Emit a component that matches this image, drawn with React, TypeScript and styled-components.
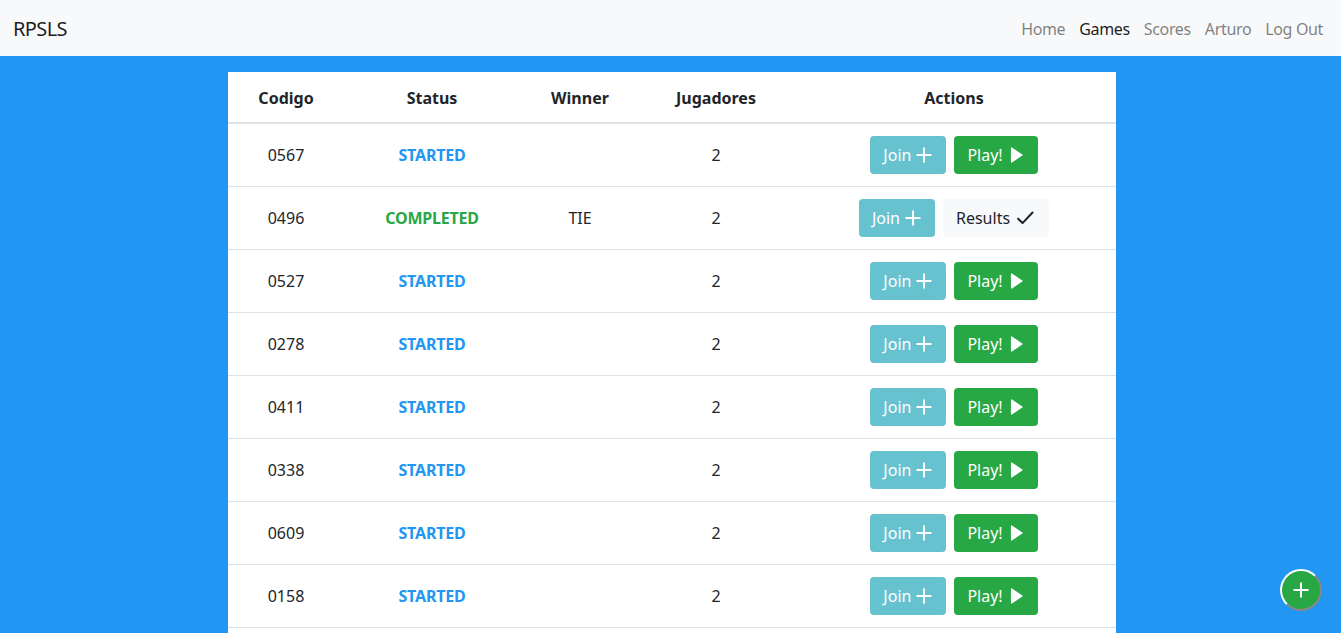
import React from "react";
import styled, { createGlobalStyle } from "styled-components";

const Global = createGlobalStyle`
  html, body { margin: 0; padding: 0; }
  body {
    background: #2196f3;
    font-family: "Segoe UI", "Noto Sans", sans-serif;
    font-size: 16px;
    line-height: 1.5;
    color: #212529;
    overflow: hidden;
  }
  * { box-sizing: border-box; }
`;

const NavBar = styled.nav`
  height: 56px;
  background: #f8f9fa;
  display: flex;
  align-items: center;
  justify-content: space-between;
  padding: 2px 11px 0 13px;
`;

const Brand = styled.div`
  font-size: 20px;
  letter-spacing: -0.6px;
  color: rgba(0, 0, 0, 0.9);
`;

const NavList = styled.div`
  display: flex;
`;

const NavLink = styled.a<{ $active?: boolean }>`
  padding: 8px 7px;
  letter-spacing: -0.35px;
  color: ${(p) => (p.$active ? "rgba(0,0,0,0.9)" : "rgba(0,0,0,0.5)")};
  text-decoration: none;
  font-size: 16px;
`;

const Main = styled.main`
  display: flex;
  justify-content: center;
  padding: 16px 0 0 3px;
`;

const Table = styled.table`
  width: 888px;
  background: #fff;
  border-collapse: collapse;
  table-layout: fixed;
`;

const Th = styled.th<{ $w: number }>`
  width: ${(p) => p.$w}px;
  padding: 14px 12px 12px;
  font-weight: 700;
  text-align: center;
  border-bottom: 2px solid #dee2e6;
  line-height: 24px;
`;

const Td = styled.td`
  padding: 12px;
  text-align: center;
  vertical-align: middle;
  border-top: 1px solid #dee2e6;
  line-height: 24px;
`;

const Status = styled.span<{ $done?: boolean }>`
  font-weight: 700;
  letter-spacing: -0.2px;
  color: ${(p) => (p.$done ? "#28a745" : "#2196f3")};
`;

const Actions = styled.div`
  display: flex;
  justify-content: center;
  gap: 8px;
`;

const Btn = styled.button<{ $variant: "info" | "success" | "light" }>`
  height: 38px;
  padding: 6px 12px;
  border: 1px solid transparent;
  border-radius: 4px;
  font-family: inherit;
  font-size: 16px;
  line-height: 24px;
  display: inline-flex;
  align-items: center;
  gap: 4px;
  background: ${(p) =>
    p.$variant === "info" ? "#17a2b8" : p.$variant === "success" ? "#28a745" : "#f8f9fa"};
  color: ${(p) => (p.$variant === "light" ? "#212529" : "#fff")};
  opacity: ${(p) => (p.$variant === "info" ? 0.65 : 1)};
`;

const Fab = styled.button`
  position: fixed;
  right: 19px;
  bottom: 22px;
  width: 42px;
  height: 42px;
  border-radius: 50%;
  background: #28a745;
  border: 2px solid #fff;
  border-right-color: #888;
  border-bottom-color: #888;
  display: flex;
  align-items: center;
  justify-content: center;
  padding: 0;
`;

const PlusIcon = ({ size = 18, color = "currentColor" }: { size?: number; color?: string }) => (
  <svg width={size} height={size} viewBox="0 0 16 16" fill="none" stroke={color} strokeWidth="1.8" strokeLinecap="round">
    <path d="M8 2v12M2 8h12" />
  </svg>
);

const PlayIcon = () => (
  <svg width="18" height="18" viewBox="0 0 16 16" fill="#fff">
    <path d="M3.5 1.8v12.4c0 .5.5.8.9.5l9.2-6.2a.6.6 0 0 0 0-1L4.4 1.3c-.4-.3-.9 0-.9.5z" />
  </svg>
);

const CheckIcon = () => (
  <svg width="22" height="22" viewBox="0 0 16 16" fill="none" stroke="#212529" strokeWidth="1.5" strokeLinecap="round" strokeLinejoin="round">
    <path d="M3 8.5l3.2 3.2L13.5 4" />
  </svg>
);

type Game = { code: string; done?: boolean; winner?: string };

const games: Game[] = [
  { code: "0567" },
  { code: "0496", done: true, winner: "TIE" },
  { code: "0527" },
  { code: "0278" },
  { code: "0411" },
  { code: "0338" },
  { code: "0609" },
  { code: "0158" },
  { code: "0402" },
];

export default function App() {
  return (
    <>
      <Global />
      <NavBar>
        <Brand>RPSLS</Brand>
        <NavList>
          <NavLink>Home</NavLink>
          <NavLink $active>Games</NavLink>
          <NavLink>Scores</NavLink>
          <NavLink>Arturo</NavLink>
          <NavLink>Log Out</NavLink>
        </NavList>
      </NavBar>
      <Main>
        <Table>
          <thead>
            <tr>
              <Th $w={116}>Codigo</Th>
              <Th $w={176}>Status</Th>
              <Th $w={120}>Winner</Th>
              <Th $w={152}>Jugadores</Th>
              <Th $w={324}>Actions</Th>
            </tr>
          </thead>
          <tbody>
            {games.map((g) => (
              <tr key={g.code}>
                <Td>{g.code}</Td>
                <Td>
                  <Status $done={g.done}>{g.done ? "COMPLETED" : "STARTED"}</Status>
                </Td>
                <Td>{g.winner ?? ""}</Td>
                <Td>2</Td>
                <Td>
                  <Actions>
                    <Btn $variant="info">
                      Join <PlusIcon />
                    </Btn>
                    {g.done ? (
                      <Btn $variant="light">
                        Results <CheckIcon />
                      </Btn>
                    ) : (
                      <Btn $variant="success">
                        Play! <PlayIcon />
                      </Btn>
                    )}
                  </Actions>
                </Td>
              </tr>
            ))}
          </tbody>
        </Table>
      </Main>
      <Fab aria-label="new game">
        <PlusIcon size={18} color="#fff" />
      </Fab>
    </>
  );
}
